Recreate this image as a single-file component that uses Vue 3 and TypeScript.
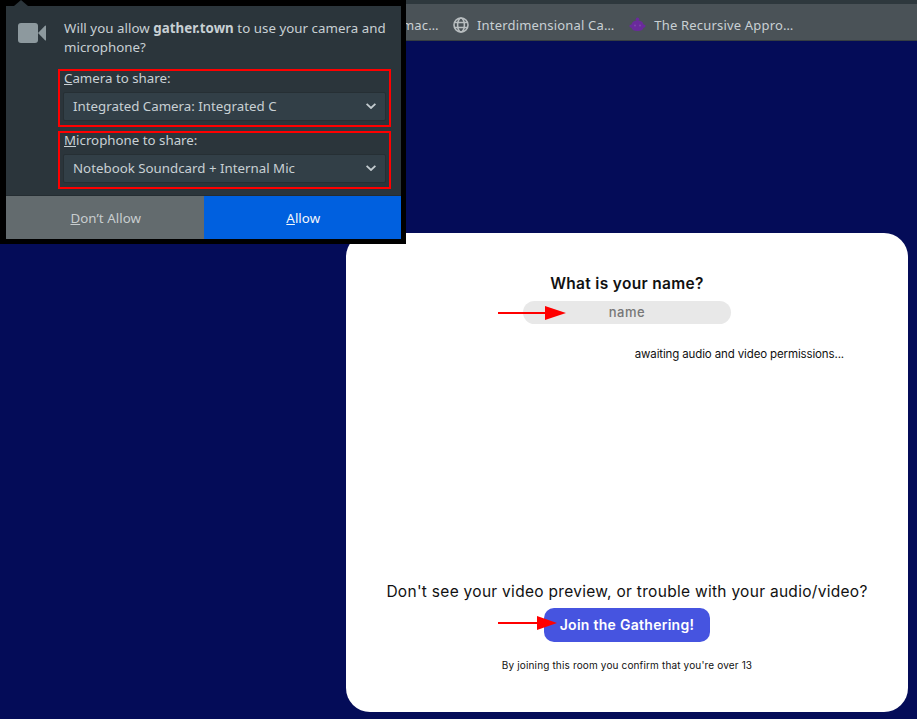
<template>
  <div class="page">
    <header class="toolbar">
      <div class="toolbar__strip"></div>
      <div class="toolbar__bookmarks">
        <span class="bookmark bookmark--cut">mac…</span>
        <span class="bookmark">
          <svg class="bookmark__icon" width="16" height="16" viewBox="0 0 16 16" fill="none" stroke="#b9bec0" stroke-width="1.6">
            <circle cx="8" cy="8" r="7" />
            <ellipse cx="8" cy="8" rx="3.4" ry="7" />
            <path d="M1.500 5.500h13M1.500 10.500h13" />
          </svg>
          Interdimensional Ca…
        </span>
        <span class="bookmark">
          <svg class="bookmark__icon" width="17" height="16" viewBox="0 0 17 16" fill="#6a2a9c">
            <circle cx="8.500" cy="2.200" r="1.700" />
            <path d="M2.500 7.500C3 5 5 3.600 8.500 3.600S14 5 14.500 7.500c1.300.2 2.100.8 2.100 1.600s-.8 1.500-2.100 1.700c-.4 2.300-2.500 3.300-6 3.300s-5.600-1-6-3.300C1.200 10.600.4 9.900.4 9.100s.8-1.400 2.100-1.600z" />
            <circle cx="6" cy="8.500" r="1" fill="#7d48ab" />
            <circle cx="11" cy="8.500" r="1" fill="#7d48ab" />
          </svg>
          The Recursive Appro…
        </span>
      </div>
    </header>

    <main class="stage">
      <section class="card">
        <h2 class="card__title">What is your name?</h2>
        <div class="field">
          <input class="field__input" type="text" placeholder="name" />
          <svg class="arrow arrow--name" width="68" height="14" viewBox="0 0 68 14">
            <path d="M0 6h47V0l21 7-21 7V8H0z" fill="#ff0000" />
          </svg>
        </div>
        <p class="card__status">awaiting audio and video permissions...</p>
        <div class="card__bottom">
          <p class="card__help">Don't see your video preview, or trouble with your audio/video?</p>
          <div class="join">
            <button class="join__btn" type="button">Join the Gathering!</button>
            <svg class="arrow arrow--join" width="59" height="14" viewBox="0 0 59 14">
              <path d="M0 6h39V0l20 7-20 7V8H0z" fill="#ff0000" />
            </svg>
          </div>
          <p class="card__legal">By joining this room you confirm that you're over 13</p>
        </div>
      </section>
    </main>

    <aside class="prompt">
      <div class="prompt__notch"></div>
      <div class="prompt__body">
        <svg class="prompt__cam" width="28" height="20" viewBox="0 0 28 20" fill="#8d999e">
          <rect x="0" y="0" width="20" height="20" rx="3" />
          <path d="M20 10 27 2.700c.4-.4 1-.2 1 .4v13.800c0 .6-.6.8-1 .4z" />
        </svg>
        <div class="prompt__content">
          <p class="prompt__question">Will you allow <b>gather.town</b> to use your camera and microphone?</p>
          <div v-for="group in groups" :key="group.key" class="device">
            <div class="device__label"><u>{{ group.key }}</u>{{ group.label }}</div>
            <div class="device__select">
              <span>{{ group.value }}</span>
              <svg width="10" height="6" viewBox="0 0 10 6" fill="none" stroke="#c4ccd0" stroke-width="1.800">
                <path d="M.6.800 5 5 9.400.800" />
              </svg>
            </div>
          </div>
        </div>
      </div>
      <div class="prompt__actions">
        <button class="prompt__btn prompt__btn--deny" type="button"><u>D</u>on’t Allow</button>
        <button class="prompt__btn prompt__btn--allow" type="button"><u>A</u>llow</button>
      </div>
    </aside>
  </div>
</template>

<script setup lang="ts">
const groups = [
  { key: 'C', label: 'amera to share:', value: 'Integrated Camera: Integrated C' },
  { key: 'M', label: 'icrophone to share:', value: 'Notebook Soundcard + Internal Mic' },
]
</script>

<style>
html,
body {
  margin: 0;
  background: #040c58;
}
</style>

<style scoped>
.page {
  position: relative;
  width: 917px;
  height: 719px;
  overflow: hidden;
  background: #040c58;
  font-family: "Noto Sans", sans-serif;
}
.toolbar {
  height: 41px;
  box-sizing: border-box;
  background: #4a5257;
  border-bottom: 1px solid #363e42;
}
.toolbar__strip {
  height: 4px;
  background: #2e383d;
}
.toolbar__bookmarks {
  display: flex;
  align-items: center;
  height: 36px;
  padding: 6px 0 0 402px;
  box-sizing: border-box;
  font-size: 13px;
  letter-spacing: 0.18px;
  color: #c9d0d4;
}
.bookmark {
  display: flex;
  align-items: center;
  gap: 8px;
  margin-right: 15px;
  white-space: nowrap;
}
.bookmark--cut {
  width: 36px;
}
.stage {
  padding: 192px 9px 0 346px;
}
.card {
  display: flex;
  flex-direction: column;
  align-items: center;
  height: 479px;
  box-sizing: border-box;
  padding-top: 41px;
  background: #fff;
  border-radius: 24px;
  font-family: "Inter", sans-serif;
  color: #111;
}
.card__title {
  margin: 0;
  font-size: 15.500px;
  line-height: 20px;
  font-weight: 600;
  letter-spacing: 0.33px;
}
.field {
  position: relative;
  margin-top: 7px;
}
.field__input {
  display: block;
  width: 208px;
  height: 23px;
  box-sizing: border-box;
  padding: 0;
  border: 0;
  border-radius: 12px;
  background: #e8e8e8;
  font: 500 13px/23px "Inter", sans-serif;
  letter-spacing: 0.5px;
  text-align: center;
}
.field__input::placeholder {
  color: #777;
}
.arrow {
  position: absolute;
}
.arrow--name {
  left: -25px;
  top: 5px;
}
.card__status {
  align-self: flex-end;
  margin: 22px 64px 0 0;
  font-size: 11.500px;
  line-height: 16px;
  letter-spacing: -0.13px;
}
.card__bottom {
  display: flex;
  flex-direction: column;
  align-items: center;
  margin-top: auto;
  padding-bottom: 40px;
}
.card__help {
  margin: 0;
  font-size: 15.500px;
  line-height: 20px;
  letter-spacing: 0.29px;
}
.join {
  position: relative;
  margin-top: 6px;
}
.join__btn {
  display: block;
  width: 166px;
  height: 34px;
  padding: 0 0 2px;
  border: 0;
  border-radius: 10px;
  background: #4654e0;
  color: #fff;
  font: 600 14px "Inter", sans-serif;
  letter-spacing: 0.28px;
}
.arrow--join {
  left: -46px;
  top: 8px;
}
.card__legal {
  margin: 16px 0 0;
  font-size: 10px;
  line-height: 14px;
  letter-spacing: 0.15px;
}
.prompt {
  position: absolute;
  left: 0;
  top: 0;
  width: 406px;
  height: 244px;
  box-sizing: border-box;
  display: flex;
  flex-direction: column;
  border: solid #000;
  border-width: 6px 5px 5px 6px;
  background: #2b353b;
  color: #c8d0d4;
  font-size: 13.300px;
}
.prompt__notch {
  position: absolute;
  left: 8px;
  top: -6px;
  width: 0;
  height: 0;
  border-left: 7px solid transparent;
  border-right: 7px solid transparent;
  border-bottom: 6px solid #2b353b;
}
.prompt__body {
  flex: 1;
  display: flex;
  padding: 17px 15px 0 12px;
}
.prompt__cam {
  flex: none;
  margin-right: 18px;
}
.prompt__content {
  flex: 1;
  min-width: 0;
}
.prompt__question {
  margin: -4px 0 12px;
  line-height: 19px;
  letter-spacing: 0.04px;
}
.device {
  margin: 0 0 4px -6px;
  width: 333px;
  height: 58px;
  box-sizing: border-box;
  border: 2px solid #f00;
  padding: 0 3px;
}
.device__label {
  padding-left: 1px;
  line-height: 14px;
  height: 21px;
}
.device__select {
  display: flex;
  align-items: center;
  justify-content: space-between;
  height: 29px;
  box-sizing: border-box;
  padding: 0 9px 1px 9px;
  background: #323f47;
  border: 1px solid #262f34;
  border-radius: 2px;
}
.prompt__actions {
  display: flex;
  height: 43px;
  border-top: 1px solid #252d32;
}
.prompt__btn {
  flex: 1;
  border: 0;
  padding: 0 0 0 2px;
  font: 13.300px "Noto Sans", sans-serif;
  letter-spacing: 0.05px;
}
.prompt__btn--deny {
  background: #636b6e;
  color: #c8cdcf;
}
.prompt__btn--allow {
  background: #0060df;
  color: #f4f7fb;
}
</style>
